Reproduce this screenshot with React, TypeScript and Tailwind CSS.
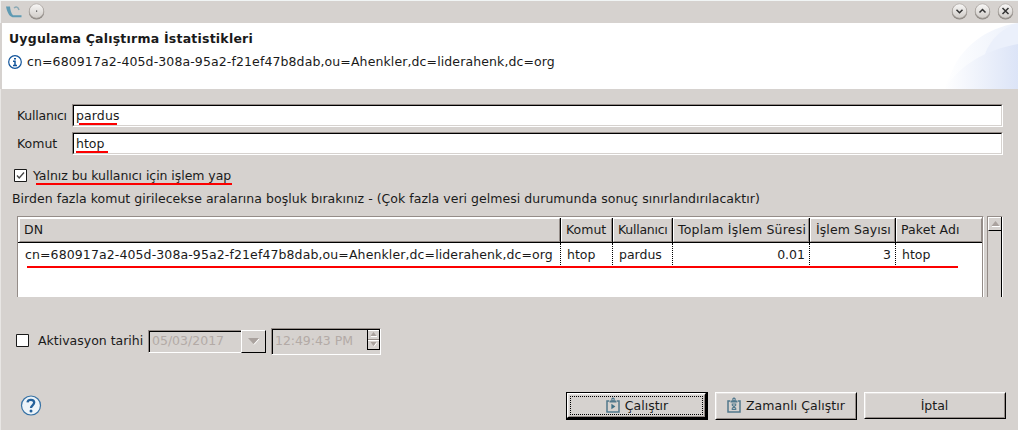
import React from "react";

function Underline({ className }: { className: string }) {
  return <span className={`pointer-events-none absolute z-10 h-[2px] bg-[#fc0000] ${className}`} />;
}

function Field({ children, className = "" }: { children: React.ReactNode; className?: string }) {
  return (
    <div className={`border border-t-[#948c88] border-l-[#948c88] border-r-white border-b-white ${className}`}>
      <div className="h-full border border-t-black border-l-black border-r-[#d6d2cf] border-b-[#d6d2cf]">{children}</div>
    </div>
  );
}

function WindowButton({ kind }: { kind: "dot" | "down" | "up" | "close" }) {
  return (
    <svg width="17" height="18" viewBox="0 0 17 18" className="shrink-0">
      <defs>
        <linearGradient id={`g-${kind}`} x1="0" y1="0" x2="0" y2="1">
          <stop offset="0" stopColor="#f8f7f6" />
          <stop offset="1" stopColor="#d0ccc8" />
        </linearGradient>
      </defs>
      <circle cx="8.5" cy="8.9" r="7.7" fill="#8b8681" />
      <circle cx="8.5" cy="8" r="7.2" fill={`url(#g-${kind})`} stroke="#aaa5a0" strokeWidth=".7" />
      {kind === "dot" && <rect x="8" y="7.5" width="1.2" height="1.2" fill="#444" />}
      {kind === "down" && <path d="M5.5 6.8l3 3 3-3" fill="none" stroke="#333" strokeWidth="1.5" />}
      {kind === "up" && <path d="M5.5 9.5l3-3 3 3" fill="none" stroke="#333" strokeWidth="1.5" />}
      {kind === "close" && <path d="M5.5 5l6 6m0-6l-6 6" fill="none" stroke="#333" strokeWidth="1.5" />}
    </svg>
  );
}

function ClipIcon({ kind }: { kind: "play" | "timer" }) {
  return (
    <svg width="14" height="16" viewBox="0 0 14 16" className="relative -top-px shrink-0">
      <path d="M3 4H1v11h12V4h-2" fill="none" stroke="#51788c" strokeWidth="1.5" />
      <path d="M3.500 5.500V3.500h1.800V1.500L7 .2l1.700 1.300v2h1.800v2z" fill="#51788c" />
      <rect x="6.4" y="2" width="1.2" height="1.2" fill="#c3cdd2" />
      {kind === "play" ? (
        <path d="M5.400 6.800v5.400l4-2.700z" fill="#3f7086" />
      ) : (
        <path d="M4.700 7h4.600M4.700 12.400h4.600M5.300 7v1.200L8.700 11.200v1.200M8.700 7v1.200L5.300 11.200v1.200" fill="none" stroke="#51788c" strokeWidth="1.100" />
      )}
    </svg>
  );
}

function PushButton({ children, className = "" }: { children: React.ReactNode; className?: string }) {
  return (
    <button className={`border border-t-white border-l-white border-r-black border-b-black ${className}`}>
      <span className="flex h-full w-full items-center justify-center border border-t-[#e4e1df] border-l-[#e4e1df] border-r-[#948c88] border-b-[#948c88]">
        {children}
      </span>
    </button>
  );
}

const columns = [
  { title: "DN", value: "cn=680917a2-405d-308a-95a2-f21ef47b8dab,ou=Ahenkler,dc=liderahenk,dc=org", width: "w-[543px]", align: "", pad: "pl-[5px]", valuePad: "pl-[7px] tracking-[0.11px]" },
  { title: "Komut", value: "htop", width: "w-[52px]", align: "", pad: "pl-[4px]", valuePad: "pl-[6px]" },
  { title: "Kullanıcı", value: "pardus", width: "w-[60px]", align: "", pad: "pl-[4px] tracking-[-0.25px]", valuePad: "pl-[6px]" },
  { title: "Toplam İşlem Süresi", value: "0.01", width: "w-[137px]", align: "justify-end", pad: "pl-[4px] tracking-[0.2px]", valuePad: "pr-[4px]" },
  { title: "İşlem Sayısı", value: "3", width: "w-[86px]", align: "justify-end", pad: "pl-[5px] tracking-[0.08px]", valuePad: "pr-[4px]" },
  { title: "Paket Adı", value: "htop", width: "w-[86px]", align: "", pad: "pl-[4px] tracking-[0.1px]", valuePad: "pl-[6px]" },
];

function ResultTable() {
  return (
    <div className="relative h-[81px] w-[967px] border-t border-l border-[#948c88] border-r border-r-white bg-white">
      <div className="h-[80px] border-r border-[#948c88]">
        <div className="flex h-[26px] border-b border-black pt-px">
          {columns.map((c, i) => (
            <div key={c.title} className={`flex shrink-0 ${c.width} ${i < 5 ? "border-r border-black" : ""} ${i === 0 ? "pl-px" : ""}`}>
              <div className={`flex flex-1 items-center whitespace-nowrap border border-t-white border-l-white border-r-[#948c88] border-b-[#948c88] bg-[#d6d2cf] ${c.pad} ${i === 0 ? "-indent-px" : ""}`}>
                {c.title}
              </div>
            </div>
          ))}
        </div>
        <div className="flex h-[24px]">
          {columns.map((c, i) => (
            <div key={c.title} className={`flex shrink-0 items-center whitespace-nowrap pb-px ${c.width} ${c.align} ${c.valuePad} ${i < 5 ? "border-r border-dotted border-black" : ""}`}>
              {c.value}
            </div>
          ))}
        </div>
      </div>
      <Underline className="left-[9px] top-[49px] w-[931px]" />
    </div>
  );
}

export default function App() {
  return (
    <div className="flex h-[430px] w-[1018px] flex-col overflow-hidden border-t border-t-[#f1f5f5] bg-[#d6d2cf] font-['DejaVu_Sans',sans-serif] text-[12.5px] leading-[16px] text-[#1a1a1a]">
      <div className="flex h-[22px] shrink-0 items-center border-l border-[#eee] pl-[5px] pr-[4px]">
        <svg width="16" height="15" viewBox="0 0 16 15">
          <path d="M0 1.500h4c.3 3.500 1 6.500 3 8.700h8.500v2H6.500C2.500 11 1 6 0 1.500z" fill="#5e9ab3" />
          <path d="M8 3c2-1.500 4-1.500 5 2" fill="none" stroke="#8aa9b5" strokeWidth="1.500" />
        </svg>
        <div className="ml-[6px]"><WindowButton kind="dot" /></div>
        <div className="ml-auto flex gap-[6px]">
          <WindowButton kind="down" />
          <WindowButton kind="up" />
          <WindowButton kind="close" />
        </div>
      </div>

      <header className="ml-[2px] flex h-[66px] shrink-0 justify-between bg-white">
        <div className="pl-[7px] pt-[8px]">
          <h1 className="whitespace-nowrap text-[12.5px] font-bold tracking-[0.22px]">Uygulama Çalıştırma İstatistikleri</h1>
          <div className="mt-[7px] flex items-center whitespace-nowrap tracking-[0.11px]">
            <svg width="14" height="14" viewBox="0 0 14 14" className="-ml-px mr-[5px]">
              <circle cx="7" cy="7" r="6.300" fill="#fff" stroke="#11549b" strokeWidth="1.200" />
              <path d="M6 3.700h2M5 6.200h2v4.300M5 10.500h4" fill="none" stroke="#11549b" strokeWidth="1.500" />
            </svg>
            {columns[0].value}
          </div>
        </div>
        <svg width="74" height="66" viewBox="0 0 74 66">
          <defs>
            <linearGradient id="swoosh"><stop offset="0" stopColor="#fff" /><stop offset="1" stopColor="#dce4f7" /></linearGradient>
            <linearGradient id="swoosh-light"><stop offset="0" stopColor="#fff" /><stop offset="1" stopColor="#ecf1fb" /></linearGradient>
          </defs>
          <path d="M8 48C17 26 40 5 74 0v66H0z" fill="url(#swoosh-light)" />
          <path d="M41 31C46 17 58 5 74 0v30z" fill="#ebf0fb" />
          <path d="M0 66C16 42 41 27 74 21v45z" fill="url(#swoosh)" />
        </svg>
      </header>

      <main className="flex flex-1 flex-col border-l border-[#e8e6e4] pl-[11px]">
        <div className="mt-[15px] flex h-[23px] items-center">
          <label className="w-[60px] pl-[5px] tracking-[-0.22px]">Kullanıcı</label>
          <Field className="relative h-[23px] w-[931px] bg-white">
            <div className="pl-[2px] pt-[2px] tracking-[0.12px]">pardus</div>
            <Underline className="left-[6px] top-[18px] w-[38px]" />
          </Field>
        </div>
        <div className="mt-[5px] flex h-[23px] items-center">
          <label className="w-[60px] pl-[5px]">Komut</label>
          <Field className="relative h-[23px] w-[931px] bg-white">
            <div className="pl-[2px] pt-[2px]">htop</div>
            <Underline className="left-[3px] top-[18px] w-[32px]" />
          </Field>
        </div>
        <div className="relative mt-[12px] flex h-[17px] items-center pl-[2px]">
          <svg width="13" height="13" viewBox="0 0 13 13">
            <path d="M.5.5h12v12H.5z" fill="#fff" stroke="#1a1a1a" />
            <path d="M3 6.500l2.200 2.500L10 3.500" fill="none" stroke="#444" strokeWidth="1.300" />
          </svg>
          <span className="ml-[6px] tracking-[-0.05px]">Yalnız bu kullanıcı için işlem yap</span>
          <Underline className="left-[24px] top-[16px] w-[196px]" />
        </div>
        <p className="mt-[7px] whitespace-nowrap tracking-[0.035px]">Birden fazla komut girilecekse aralarına boşluk bırakınız - (Çok fazla veri gelmesi durumunda sonuç sınırlandırılacaktır)</p>

        <div className="mt-[9px] flex pl-[5px]">
          <ResultTable />
          <div className="ml-[3px] h-[81px] w-[16px] border-t border-l border-[#948c88] border-r border-r-white">
            <div className="h-full border-r border-black">
              <div className="flex h-[14px] items-center justify-center border-t border-l border-b border-t-white border-l-white border-b-black">
                <svg width="9" height="6"><path d="M4.500 0L8.500 5h-8z" fill="#aaa29e" /><path d="M1 5.500h8" stroke="#fff" /></svg>
              </div>
            </div>
          </div>
        </div>

        <div className="mt-[30px] flex h-[28px] items-center pl-[4px]">
          <svg width="13" height="13" className="relative -top-px"><path d="M.5.5h12v12H.5z" fill="#fff" stroke="#1a1a1a" /></svg>
          <span className="ml-[9px] w-[110px] whitespace-nowrap">Aktivasyon tarihi</span>
          <div className="flex h-[23px] w-[118px] text-[#b3aaa6]">
            <div className="w-[93px] border-t border-l border-t-[#948c88] border-l-[#948c88] border-b border-b-white">
              <div className="h-full border-t border-l border-black pl-[2px] pt-px">05/03/2017</div>
            </div>
            <div className="flex w-[25px] items-center justify-center border border-t-white border-l-white border-b-black border-r-black">
              <svg width="13" height="8"><path d="M1 1h11L6.500 7z" fill="#aaa29e" /><path d="M7 7.500L12 2" stroke="#fff" /></svg>
            </div>
          </div>
          <div className="ml-[5px] flex h-[27px] w-[110px] border border-t-[#948c88] border-l-[#948c88] border-r-white border-b-white text-[#b3aaa6]">
            <div className="flex w-full border-t border-l border-black">
              <div className="w-[94px] whitespace-nowrap pl-[2px] pt-[3px] tracking-[-0.05px]">12:49:43 PM</div>
              <div className="flex h-[20px] w-[13px] flex-col border-r border-b border-l border-black">
                <div className="flex flex-1 items-center justify-center border-t border-b border-t-white border-b-[#948c88]"><svg width="7" height="5"><path d="M3.500 0l3 4h-6z" fill="#aaa29e" /><path d="M1 4.500h6" stroke="#fff" /></svg></div>
                <div className="flex flex-1 items-center justify-center border-t border-white"><svg width="7" height="5"><path d="M.5 0h6l-3 4z" fill="#aaa29e" /><path d="M4 4.500l3-4" stroke="#fff" /></svg></div>
              </div>
            </div>
          </div>
        </div>

        <footer className="mt-[37px] flex h-[29px] items-start">
          <svg width="22" height="22" viewBox="0 0 22 22" className="ml-[8px] mt-[3px]">
            <circle cx="11" cy="10.500" r="9.500" fill="#edf4f9" stroke="#3772a5" strokeWidth="1.200" />
            <path d="M7.500 7.300C8 4 14.200 4 14.200 7.600c0 2.700-3.200 2.700-3.200 5.400" fill="none" stroke="#24619b" strokeWidth="2.300" />
            <circle cx="11" cy="16" r="1.500" fill="#24619b" />
          </svg>
          <div className="ml-[524px] h-[28px] w-[142px] border border-r-2 border-b-2 border-black">
            <PushButton className="relative h-full w-full">
              <span className="flex items-center gap-[5px] pl-px"><ClipIcon kind="play" />Çalıştır</span>
              <span className="absolute bottom-[2px] left-[2px] right-[2px] top-[2px] border border-dotted border-black" />
            </PushButton>
          </div>
          <PushButton className="ml-[7px] h-[28px] w-[142px]">
            <span className="flex items-center gap-[5px] whitespace-nowrap tracking-[0.05px]"><ClipIcon kind="timer" />Zamanlı Çalıştır</span>
          </PushButton>
          <PushButton className="ml-[7px] h-[27px] w-[142px]"><span className="pr-px">İptal</span></PushButton>
        </footer>
      </main>
    </div>
  );
}
